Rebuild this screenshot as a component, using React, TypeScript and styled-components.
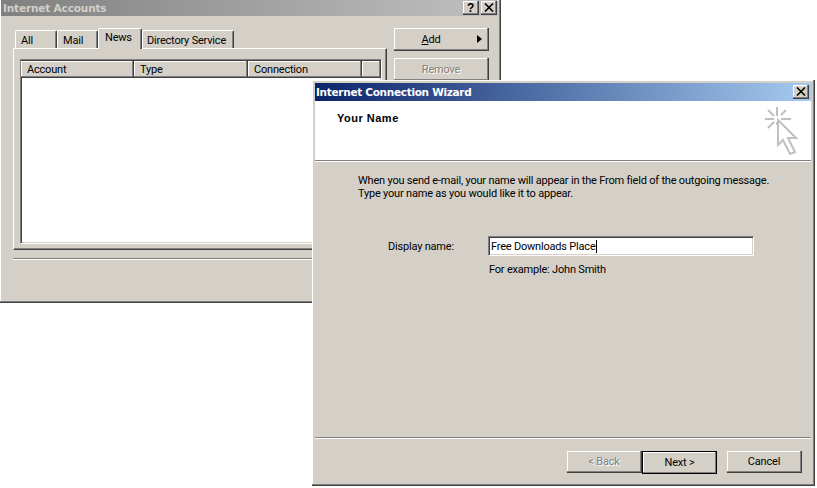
import styled, { createGlobalStyle } from 'styled-components';

const GlobalStyle = createGlobalStyle`
    html, body {
        margin: 0;
        padding: 0;
        background: white;
    }
    * {
        box-sizing: border-box;
    }
`

const Desktop = styled.div`
    position: relative;
    width: 817px;
    height: 488px;
    overflow: hidden;
    background: white;
    font-family: Roboto, "Liberation Sans", Arial, sans-serif;
    font-size: 11px;
    letter-spacing: -0.2px;
    color: black;
`

const Window = styled.div<{ $x: number; $y: number; $w: number; $h: number }>`
    position: absolute;
    left: ${p => p.$x}px;
    top: ${p => p.$y}px;
    width: ${p => p.$w}px;
    height: ${p => p.$h}px;
    display: flex;
    flex-direction: column;
    background: #d4d0c8;
    border-right: 1px solid #404040;
    border-bottom: 1px solid #404040;
    box-shadow: inset -1px -1px 0 #808080, inset 1px 1px 0 white;
`

const TitleBar = styled.div<{ $active?: boolean }>`
    flex: none;
    height: ${p => (p.$active ? 18 : 16)}px;
    margin: ${p => (p.$active ? '3px 2px 0 3px' : '0 2px 0 1px')};
    padding: ${p => (p.$active ? '0 3px 0 1px' : '0 1px 0 2px')};
    display: flex;
    align-items: center;
    justify-content: space-between;
    background: ${p => (p.$active
        ? 'linear-gradient(to right, #0a246a, #a6caf0)'
        : 'linear-gradient(to right, #808080, #c0c0c0)')};
    color: ${p => (p.$active ? 'white' : '#d4d0c8')};
    font-family: "DejaVu Sans", sans-serif;
    font-size: 10.5px;
    letter-spacing: ${p => (p.$active ? -0.3 : -0.15)}px;
    font-weight: bold;
`

const TitleButtons = styled.div`
    display: flex;
    gap: 2px;
`

const TitleButton = styled.div`
    width: 16px;
    height: 14px;
    display: flex;
    align-items: center;
    justify-content: center;
    background: #d4d0c8;
    color: black;
    border-right: 1px solid #404040;
    border-bottom: 1px solid #404040;
    box-shadow: inset -1px -1px 0 #808080, inset 1px 1px 0 white;
    font-family: "Liberation Sans", Arial, sans-serif;
    font-size: 12px;
    font-weight: bold;
`

const CloseGlyph = styled.svg`
    width: 10px;
    height: 9px;
`

const AccountsBody = styled.div`
    flex: none;
    display: flex;
    padding: 12px 10px 0 13px;
    gap: 7px;
`

const TabColumn = styled.div`
    width: 374px;
    display: flex;
    flex-direction: column;
`

const TabRow = styled.div`
    height: 20px;
    padding-left: 2px;
    display: flex;
    align-items: flex-end;
    position: relative;
    z-index: 1;
`

const Tab = styled.div<{ $selected?: boolean; $w: number; $inset: number }>`
    width: ${p => p.$w}px;
    height: ${p => (p.$selected ? 21 : 18)}px;
    margin-bottom: ${p => (p.$selected ? -1 : 0)}px;
    padding: ${p => (p.$selected ? 2 : 3)}px 0 0 ${p => p.$inset}px;
    background: #d4d0c8;
    border-top: 1px solid white;
    border-left: 1px solid white;
    border-right: 1px solid #404040;
    border-top-left-radius: 2px;
    border-top-right-radius: 2px;
    box-shadow: inset -1px 0 0 #808080;
`

const TabPanel = styled.div`
    height: 202px;
    padding: 10px 4px 5px 6px;
    border-top: 1px solid white;
    border-left: 1px solid white;
    border-right: 1px solid #404040;
    border-bottom: 1px solid #404040;
    box-shadow: inset -1px -1px 0 #808080;
`

const ListView = styled.div`
    height: 100%;
    background: white;
    border-top: 1px solid #808080;
    border-left: 1px solid #808080;
    border-right: 1px solid white;
    border-bottom: 1px solid white;
    box-shadow: inset 1px 1px 0 #404040, inset -1px -1px 0 #d4d0c8;
    padding-top: 1px;
`

const ListHeader = styled.div`
    display: flex;
    height: 17px;
`

const HeaderCell = styled.div<{ $w: number }>`
    width: ${p => p.$w}px;
    height: 17px;
    padding: 2px 0 0 6px;
    background: #d4d0c8;
    border-right: 1px solid #404040;
    border-bottom: 1px solid #404040;
    box-shadow: inset -1px -1px 0 #808080, inset 1px 1px 0 white;
`

const ButtonColumn = styled.div`
    width: 95px;
    display: flex;
    flex-direction: column;
    gap: 7px;
`

const RaisedButton = styled.div<{ $disabled?: boolean; $default?: boolean }>`
    position: relative;
    height: 23px;
    display: flex;
    align-items: center;
    justify-content: center;
    background: #d4d0c8;
    color: ${p => (p.$disabled ? '#808080' : 'black')};
    text-shadow: ${p => (p.$disabled ? '1px 1px 0 white' : 'none')};
    border: ${p => (p.$default ? '1px solid black' : 'none')};
    border-right: 1px solid ${p => (p.$default ? 'black' : '#404040')};
    border-bottom: 1px solid ${p => (p.$default ? 'black' : '#404040')};
    box-shadow: inset -1px -1px 0 #808080, inset 1px 1px 0 white;
`

const MenuButton = styled(RaisedButton)`
    padding-right: 20px;
`

const MenuArrow = styled.span`
    position: absolute;
    right: 6px;
    top: 7px;
    width: 0;
    height: 0;
    border-left: 5px solid black;
    border-top: 4.5px solid transparent;
    border-bottom: 4.5px solid transparent;
`

const GrooveRow = styled.div`
    margin: 8px 10px 0 13px;
    border-top: 1px solid #808080;
    border-bottom: 1px solid white;
    height: 2px;
`

const WizardHeader = styled.div`
    flex: none;
    height: 59px;
    margin: 0 3px 0 3px;
    padding: 11px 0 0 22px;
    display: flex;
    justify-content: space-between;
    background: white;
`

const WizardTitle = styled.div`
    font-family: "Liberation Sans", Arial, sans-serif;
    font-weight: bold;
    letter-spacing: 0.5px;
`

const CursorIcon = styled.svg`
    margin: -6px 13px 0 0;
    width: 34px;
    height: 50px;
`

const HeaderRule = styled.div`
    flex: none;
    margin: 0 3px;
    height: 2px;
    border-top: 1px solid #808080;
    border-bottom: 1px solid white;
`

const WizardBody = styled.div`
    flex: 1;
    padding: 12px 0 0 46px;
    display: flex;
    flex-direction: column;
`

const Paragraph = styled.div`
    line-height: 13px;
`

const FieldRow = styled.div`
    margin: 36px 0 0 30px;
    display: flex;
    align-items: center;
`

const FieldLabel = styled.div`
    width: 100px;
`

const NameBox = styled.div`
    width: 266px;
    height: 20px;
    padding-left: 2px;
    display: flex;
    align-items: center;
    background: white;
    border-top: 1px solid #808080;
    border-left: 1px solid #808080;
    border-right: 1px solid white;
    border-bottom: 1px solid white;
    box-shadow: inset 1px 1px 0 #404040, inset -1px -1px 0 #d4d0c8;
`

const Caret = styled.span`
    width: 1px;
    height: 13px;
    background: black;
`

const Hint = styled.div`
    margin: 7px 0 0 131px;
`

const FooterRule = styled.div`
    flex: none;
    margin: 0 3px;
    height: 2px;
    border-top: 1px solid #808080;
    border-bottom: 1px solid white;
`

const WizardFooter = styled.div`
    flex: none;
    height: 46px;
    padding: 12px 12px 0 0;
    display: flex;
    align-items: flex-start;
    justify-content: flex-end;
`

const WizardButton = styled(RaisedButton)`
    width: 75px;
    height: ${p => (p.$default ? 23 : 22)}px;
    margin-right: ${p => (p.$default ? 10 : 0)}px;
    padding-bottom: ${p => (p.$default ? 1 : 0)}px;
`

const Underlined = styled.span`
    text-decoration: underline;
`

function CloseIcon() {
    return (
        <CloseGlyph viewBox="0 0 10 9" fill="none" stroke="black" strokeWidth="1.6">
            <path d="M1 0.5l8 8M9 0.5l-8 8" />
        </CloseGlyph>
    )
}

export default function App() {
    return (
        <Desktop>
            <GlobalStyle />
            <Window $x={0} $y={0} $w={501} $h={303}>
                <TitleBar>
                    <span>Internet Accounts</span>
                    <TitleButtons>
                        <TitleButton>?</TitleButton>
                        <TitleButton><CloseIcon /></TitleButton>
                    </TitleButtons>
                </TitleBar>
                <AccountsBody>
                    <TabColumn>
                        <TabRow>
                            <Tab $w={42} $inset={5}>All</Tab>
                            <Tab $w={41} $inset={5}>Mail</Tab>
                            <Tab $w={44} $inset={6} $selected>News</Tab>
                            <Tab $w={92} $inset={4}>Directory Service</Tab>
                        </TabRow>
                        <TabPanel>
                            <ListView>
                                <ListHeader>
                                    <HeaderCell $w={113}>Account</HeaderCell>
                                    <HeaderCell $w={114}>Type</HeaderCell>
                                    <HeaderCell $w={114}>Connection</HeaderCell>
                                    <HeaderCell $w={19} />
                                </ListHeader>
                            </ListView>
                        </TabPanel>
                    </TabColumn>
                    <ButtonColumn>
                        <MenuButton>
                            <span><Underlined>A</Underlined>dd</span>
                            <MenuArrow />
                        </MenuButton>
                        <RaisedButton $disabled>Remove</RaisedButton>
                    </ButtonColumn>
                </AccountsBody>
                <GrooveRow />
            </Window>

            <Window $x={312} $y={80} $w={503} $h={406}>
                <TitleBar $active>
                    <span>Internet Connection Wizard</span>
                    <TitleButton><CloseIcon /></TitleButton>
                </TitleBar>
                <WizardHeader>
                    <WizardTitle>Your Name</WizardTitle>
                    <CursorIcon viewBox="0 0 34 50" fill="none" stroke="#c0c0c0" strokeWidth="2">
                        <path d="M13 1v9M13 16v3M1 13h9M17 13h10M4 4l6 6M22 4l-5 5M4 22l6-6" />
                        <path d="M14 14l18 18h-8l7 14-5 2-7-14-5 5z" fill="white" />
                    </CursorIcon>
                </WizardHeader>
                <HeaderRule />
                <WizardBody>
                    <Paragraph>
                        When you send e-mail, your name will appear in the From field of the outgoing message.
                        <br />
                        Type your name as you would like it to appear.
                    </Paragraph>
                    <FieldRow>
                        <FieldLabel>Display name:</FieldLabel>
                        <NameBox>Free Downloads Place<Caret /></NameBox>
                    </FieldRow>
                    <Hint>For example: John Smith</Hint>
                </WizardBody>
                <FooterRule />
                <WizardFooter>
                    <WizardButton $disabled>&lt; Back</WizardButton>
                    <WizardButton $default>Next &gt;</WizardButton>
                    <WizardButton>Cancel</WizardButton>
                </WizardFooter>
            </Window>
        </Desktop>
    )
}
